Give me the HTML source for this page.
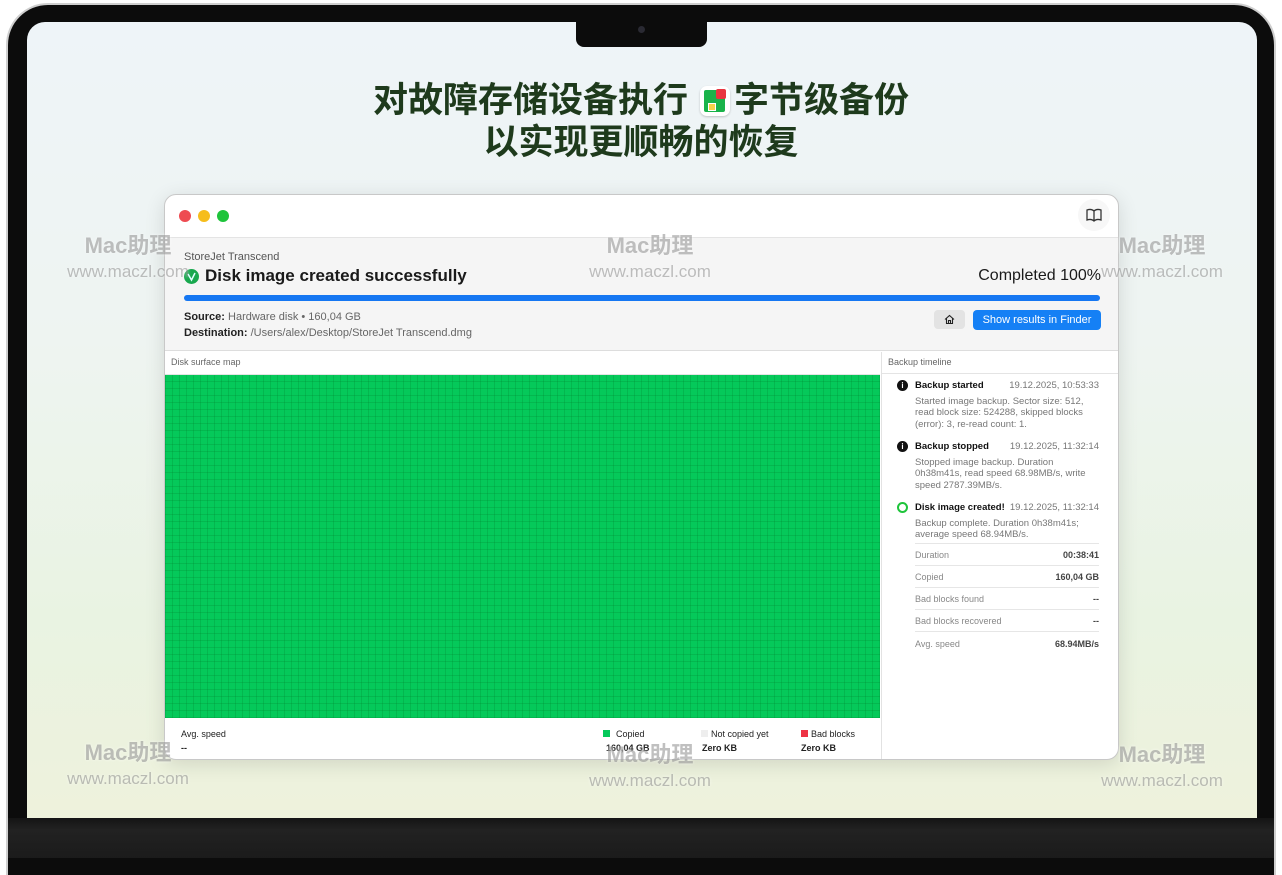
<!DOCTYPE html>
<html><head><meta charset="utf-8">
<style>
*{margin:0;padding:0;box-sizing:border-box}
body{width:1282px;height:858px;background:#fff;position:relative;overflow:hidden;font-family:"Liberation Sans","Noto Sans CJK SC",sans-serif;}
.bezel{position:absolute;left:8px;top:5px;width:1266px;height:870px;background:#0c0c0c;border-radius:40px 40px 0 0;box-shadow:0 0 0 2px #cfcfcf;}
.screen{position:absolute;left:27px;top:22px;width:1230px;height:796px;border-radius:18px 18px 0 0;overflow:hidden;
background:linear-gradient(180deg,#eef4f8 0%,#eef4f1 40%,#e9f3e2 75%,#eef2dc 100%);}
.chin{position:absolute;left:8px;top:818px;width:1266px;height:40px;background:linear-gradient(#141414,#222 30%,#1b1b1b);}
.notch{position:absolute;left:576px;top:20px;width:131px;height:27px;background:#0c0c0c;border-radius:0 0 8px 8px;}
.cam{position:absolute;left:638px;top:26px;width:7px;height:7px;border-radius:50%;background:#2a2a33;}
.title{position:absolute;left:0;width:1282px;text-align:center;font-size:35px;font-weight:bold;color:#1e3a1c;font-family:"Noto Sans CJK SC",sans-serif;line-height:42px;}
.appicon{display:inline-block;width:30px;height:30px;vertical-align:-4px;background:#fff;border-radius:7px;position:relative;margin:0 4px;box-shadow:0 1px 2px rgba(0,0,0,.2)}
.win{position:absolute;left:164px;top:194px;width:955px;height:566px;background:#fff;border-radius:12px;border:1px solid #c8c8c8;overflow:hidden;box-shadow:0 4px 20px rgba(0,0,0,.12);}
.hdr{position:absolute;left:0;top:42px;width:955px;height:114px;background:#f5f5f5;border-top:1px solid #e4e4e4;border-bottom:1px solid #ddd;}
.dot{position:absolute;top:15px;width:12px;height:12px;border-radius:50%}
.map{position:absolute;left:0;top:180px;width:715px;height:343px;background-color:#05c95a;
background-image:linear-gradient(90deg,rgba(0,120,40,.22) 1px,transparent 1px),linear-gradient(0deg,rgba(0,120,40,.22) 1px,transparent 1px);background-size:7px 7px;}
.rp{position:absolute;left:716px;top:157px;width:239px;height:409px;border-left:1px solid #e2e2e2;}
.ev{position:absolute;left:33px;font-size:9.5px;color:#777;line-height:11.5px}
.ev b{color:#111;font-size:9.5px}
.ev .t{position:absolute;right:0;top:0;color:#777}
.stat{position:absolute;left:33px;width:184px;font-size:9px;color:#888;border-top:1px solid #e6e6e6;height:22px;line-height:22px}
.stat span{float:right;color:#444;font-weight:bold}
.wm{position:absolute;color:rgba(130,130,130,.5);text-align:center;width:160px;text-shadow:0 0 3px rgba(255,255,255,.6)}
.wm .a{font-size:22px;line-height:26px;font-weight:bold}
.wm .b{font-size:17px;line-height:26px}
</style></head><body>
<div class="bezel"></div>
<div class="screen"></div>
<div class="chin"></div>
<div class="notch"></div><div class="cam"></div>

<div class="title" style="top:77px">对故障存储设备执行 <span class="appicon"><span style="position:absolute;left:4px;top:4px;width:21px;height:22px;background:#19b34a;border-radius:2px"></span><span style="position:absolute;left:16px;top:3px;width:10px;height:10px;background:#e8343f;border-radius:2px"></span><span style="position:absolute;left:8px;top:17px;width:8px;height:8px;background:#f5d34a;border:1px solid #fff"></span></span>字节级备份</div>
<div class="title" style="top:119px">以实现更顺畅的恢复</div>

<div class="win">
  <div class="dot" style="left:14px;background:#ee4b51"></div>
  <div class="dot" style="left:33px;background:#f6bd1c"></div>
  <div class="dot" style="left:52px;background:#1ec43b"></div>
  <div style="position:absolute;right:8px;top:4px;width:32px;height:32px;border-radius:50%;background:#f7f7f7">
    <svg width="32" height="32" viewBox="0 0 32 32"><path d="M9 11v10c3-1 5-1 7 1 2-2 4-2 7-1V11c-3-1-5-1-7 1-2-2-4-2-7-1zM16 12v10" fill="none" stroke="#333" stroke-width="1.3"/></svg>
  </div>
  <div class="hdr">
    <div style="position:absolute;left:19px;top:13px;font-size:11px;color:#555">StoreJet Transcend</div>
    <div style="position:absolute;left:19px;top:31px;width:15px;height:15px;border-radius:50%;background:#18a84e"><svg width="15" height="15"><path d="M4 5l3.5 6L11 4" fill="none" stroke="#dff" stroke-width="1.5"/></svg></div>
    <div style="position:absolute;left:40px;top:28px;font-size:17px;font-weight:bold;color:#1a1a1a">Disk image created successfully</div>
    <div style="position:absolute;right:19px;top:29px;font-size:16px;color:#1a1a1a">Completed 100%</div>
    <div style="position:absolute;left:19px;top:57px;width:916px;height:6px;border-radius:3px;background:#1677f2"></div>
    <div style="position:absolute;left:19px;top:73px;font-size:11px;color:#666"><b style="color:#222">Source:</b> Hardware disk • 160,04 GB</div>
    <div style="position:absolute;left:19px;top:89px;font-size:11px;color:#666"><b style="color:#222">Destination:</b> /Users/alex/Desktop/StoreJet Transcend.dmg</div>
    <div style="position:absolute;left:769px;top:72px;width:31px;height:19px;border-radius:4px;background:#e3e3e3"><svg width="31" height="19"><path d="M11 9.5l4.5-4 4.5 4M12.5 8.5v5h6v-5M14.5 13.5v-3h2v3" fill="none" stroke="#222" stroke-width="1.1"/></svg></div>
    <div style="position:absolute;left:808px;top:72px;width:128px;height:20px;border-radius:4px;background:#1580f5;color:#fff;font-size:11px;line-height:20px;text-align:center">Show results in Finder</div>
  </div>
  <div style="position:absolute;left:6px;top:162px;font-size:9px;color:#666">Disk surface map</div>
  <div style="position:absolute;left:0;top:179px;width:715px;height:1px;background:#e4e4e4"></div>
  <div class="map"></div>
  <div style="position:absolute;left:16px;top:534px;font-size:9px;color:#222">Avg. speed</div>
  <div style="position:absolute;left:16px;top:548px;font-size:9px;color:#222;font-weight:bold">--</div>
  <div style="position:absolute;left:438px;top:535px;width:7px;height:7px;background:#05c95a"></div>
  <div style="position:absolute;left:451px;top:534px;font-size:9px;color:#222">Copied</div>
  <div style="position:absolute;left:441px;top:548px;font-size:9px;color:#222;font-weight:bold">160,04 GB</div>
  <div style="position:absolute;left:536px;top:535px;width:7px;height:7px;background:#eee"></div>
  <div style="position:absolute;left:546px;top:534px;font-size:9px;color:#222">Not copied yet</div>
  <div style="position:absolute;left:537px;top:548px;font-size:9px;color:#222;font-weight:bold">Zero KB</div>
  <div style="position:absolute;left:636px;top:535px;width:7px;height:7px;background:#ee3344"></div>
  <div style="position:absolute;left:646px;top:534px;font-size:9px;color:#222">Bad blocks</div>
  <div style="position:absolute;left:636px;top:548px;font-size:9px;color:#222;font-weight:bold">Zero KB</div>

  <div class="rp">
    <div style="position:absolute;left:6px;top:5px;font-size:9px;color:#666">Backup timeline</div>
    <div style="position:absolute;left:0;top:21px;width:239px;height:1px;background:#e4e4e4"></div>
    <div style="position:absolute;left:15px;top:28px;width:11px;height:11px;border-radius:50%;background:#111;color:#fff;font-size:8px;text-align:center;line-height:11px;font-weight:bold">i</div>
    <div class="ev" style="top:28px;width:184px"><b>Backup started</b><span class="t">19.12.2025, 10:53:33</span><br><div style="margin-top:4px">Started image backup. Sector size: 512, read block size: 524288, skipped blocks (error): 3, re-read count: 1.</div></div>
    <div style="position:absolute;left:15px;top:89px;width:11px;height:11px;border-radius:50%;background:#111;color:#fff;font-size:8px;text-align:center;line-height:11px;font-weight:bold">i</div>
    <div class="ev" style="top:89px;width:184px"><b>Backup stopped</b><span class="t">19.12.2025, 11:32:14</span><br><div style="margin-top:4px">Stopped image backup. Duration 0h38m41s, read speed 68.98MB/s, write speed 2787.39MB/s.</div></div>
    <div style="position:absolute;left:15px;top:150px;width:11px;height:11px;border-radius:50%;border:2px solid #1ec43b"></div>
    <div class="ev" style="top:150px;width:184px"><b>Disk image created!</b><span class="t">19.12.2025, 11:32:14</span><br><div style="margin-top:4px">Backup complete. Duration 0h38m41s; average speed 68.94MB/s.</div></div>
    <div class="stat" style="top:191px">Duration<span>00:38:41</span></div>
    <div class="stat" style="top:213px">Copied<span>160,04 GB</span></div>
    <div class="stat" style="top:235px">Bad blocks found<span>--</span></div>
    <div class="stat" style="top:257px">Bad blocks recovered<span>--</span></div>
    <div class="stat" style="top:279px;height:25px;line-height:25px">Avg. speed<span>68.94MB/s</span></div>
  </div>
</div>

<div class="wm" style="left:48px;top:233px"><div class="a">Mac助理</div><div class="b">www.maczl.com</div></div>
<div class="wm" style="left:570px;top:233px"><div class="a">Mac助理</div><div class="b">www.maczl.com</div></div>
<div class="wm" style="left:1082px;top:233px"><div class="a">Mac助理</div><div class="b">www.maczl.com</div></div>
<div class="wm" style="left:48px;top:740px"><div class="a">Mac助理</div><div class="b">www.maczl.com</div></div>
<div class="wm" style="left:570px;top:742px"><div class="a">Mac助理</div><div class="b">www.maczl.com</div></div>
<div class="wm" style="left:1082px;top:742px"><div class="a">Mac助理</div><div class="b">www.maczl.com</div></div>
</body></html>
